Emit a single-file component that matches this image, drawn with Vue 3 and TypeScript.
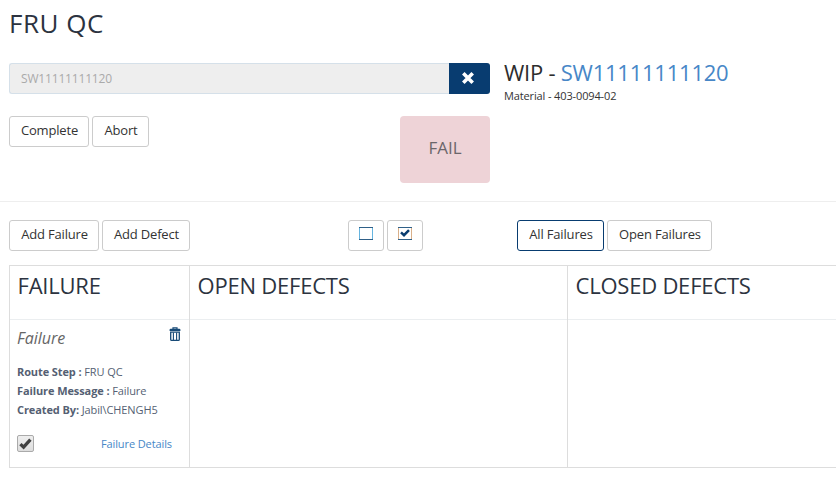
<script setup lang="ts">
import { ref } from 'vue'

const serial = ref('SW11111111120')
const details = [
  { label: 'Route Step :', value: 'FRU QC' },
  { label: 'Failure Message :', value: 'Failure' },
  { label: 'Created By:', value: 'Jabil\\CHENGH5' },
]
</script>

<template>
  <main class="page">
    <h1 class="title">FRU QC</h1>

    <section class="top">
      <div class="scan">
        <div class="input-group">
          <input class="field" :value="serial" disabled />
          <button class="clear" aria-label="Clear">
            <svg width="14" height="14" viewBox="0 0 14 14"><path d="M2.3 2.3 11.7 11.7M11.7 2.3 2.3 11.7" stroke="#fff" stroke-width="3.6" /></svg>
          </button>
        </div>
        <div class="actions">
          <button class="btn w-complete">Complete</button>
          <button class="btn w-abort">Abort</button>
          <div class="status">FAIL</div>
        </div>
      </div>
      <div class="wip">
        <h2 class="wip-title"><span>WIP - </span><a>{{ serial }}</a></h2>
        <p class="material">Material - 403-0094-02</p>
      </div>
    </section>

    <section class="toolbar">
      <div class="group left">
        <button class="btn w-addf">Add Failure</button>
        <button class="btn w-addd">Add Defect</button>
      </div>
      <div class="group middle">
        <button class="btn icon" aria-label="Uncheck all">
          <svg width="14" height="13" viewBox="0 0 14 13"><path d="M0 .5H14M0 12.5H14" stroke="#2f6088" /><path d="M.5 1V12M13.5 1V12" stroke="#66b5e0" /></svg>
        </button>
        <button class="btn icon" aria-label="Check all">
          <svg width="14" height="13" viewBox="0 0 14 13"><path d="M0 .5H14M0 12.5H14" stroke="#2f6088" /><path d="M.5 1V12" stroke="#d9b08a" /><path d="M13.5 1V12" stroke="#d9b08a" /><path d="M3 5.4 6 8.2 11 3.2" fill="none" stroke="#083c70" stroke-width="2.5" /></svg>
        </button>
      </div>
      <div class="group">
        <button class="btn active w-all">All Failures</button>
        <button class="btn w-open">Open Failures</button>
      </div>
    </section>

    <section class="board">
      <div class="col col-failure">
        <h3 class="col-head">FAILURE</h3>
        <article class="card">
          <header class="card-head">
            <em>Failure</em>
            <svg class="trash" width="12" height="14" viewBox="0 0 12 14">
              <path d="M4 2V.8h4V2" fill="none" stroke="#174a77" stroke-width="1.2" />
              <path d="M.6 4V2.8Q.6 1.8 1.6 1.8h8.8q1 0 1 1V4z" fill="#174a77" />
              <path d="M1.7 5.2h8.6v7.2q0 .9-.9.9H2.6q-.9 0-.9-.9z" fill="none" stroke="#174a77" stroke-width="1.3" />
              <path d="M4.4 5.5v7.5M7.6 5.5v7.5" stroke="#174a77" stroke-width="1.1" />
            </svg>
          </header>
          <p v-for="d in details" :key="d.label" class="row"><b>{{ d.label }}</b> {{ d.value }}</p>
          <footer class="card-foot">
            <span class="check">
              <svg width="13" height="13" viewBox="0 0 13 13"><path d="M1.4 7.1 4.6 10.2 11.4 2.7" fill="none" stroke="#404040" stroke-width="3.3" /></svg>
            </span>
            <a class="link">Failure Details</a>
          </footer>
        </article>
      </div>
      <div class="col col-open"><h3 class="col-head">OPEN DEFECTS</h3></div>
      <div class="col col-closed"><h3 class="col-head">CLOSED DEFECTS</h3></div>
    </section>
  </main>
</template>

<style>
body { background: #fff; overflow: hidden; }
</style>

<style scoped>
.page, .page * { box-sizing: border-box; }
.page { height: 477px; overflow: hidden; font-family: "Open Sans", sans-serif; font-size: 13px; color: #333; }
h1, h2, h3, p { margin: 0; font-weight: 400; }
button, input { font: inherit; }
a { color: #4787c7; }

.title { height: 63px; padding: 5px 0 0 9px; font-size: 26px; letter-spacing: .5px; line-height: 36px; color: #2c3340; }
.top { display: flex; height: 139px; padding-left: 9px; border-bottom: 1px solid #eee; }
.scan { width: 481px; }
.input-group { display: flex; height: 31px; }
.field { width: 440px; height: 31px; padding: 0 11px; border: 1px solid #d5e0e9; border-right: 0; border-radius: 3px 0 0 3px; background: #eee; color: #aaa; font-size: 12px; letter-spacing: -.17px; }
.clear { display: flex; align-items: center; justify-content: center; width: 41px; height: 31px; padding: 0 3px 1px 0; border: 0; border-radius: 0 3px 3px 0; background: #083c70; }
.actions { display: flex; align-items: flex-start; gap: 3px; margin-top: 22px; }
.status { display: flex; align-items: center; justify-content: center; width: 90px; height: 67px; margin-left: auto; padding-bottom: 4px; border-radius: 4px; background: #eed3d7; color: #6b666b; font-size: 17px; }
.wip { padding-left: 14px; }
.wip-title { display: flex; margin-top: -6px; font-size: 22px; letter-spacing: -.24px; line-height: 30px; white-space: pre; color: #2d2d2d; }
.material { margin-top: 1px; font-size: 11px; line-height: 16px; letter-spacing: -.13px; }

.btn { display: flex; align-items: center; justify-content: center; height: 31px; padding: 0 0 3px 1px; border: 1px solid #ccc; border-radius: 3px; background: #fff; color: #333; white-space: nowrap; letter-spacing: -.17px; }
.btn.active { border-color: #083c70; }
.w-complete { width: 80px; }
.w-abort { width: 57px; }
.w-addf { width: 90px; }
.w-addd { width: 88px; }
.w-all { width: 87px; }
.w-open { width: 105px; }
.btn.icon { width: 36px; padding: 0 0 4px; }

.toolbar { display: flex; height: 63px; padding: 18px 0 0 9px; }
.group { display: flex; gap: 3px; }
.left { width: 339px; }
.middle { width: 169px; }

.board { display: flex; height: 203px; margin-left: 9px; border: 1px solid #ddd; border-right: 0; }
.col { border-right: 1px solid #ddd; }
.col-failure { width: 180px; }
.col-open { width: 378px; }
.col-closed { flex: 1; border-right: 0; }
.col-head { height: 54px; padding: 4px 0 0 7.5px; border-bottom: 1px solid #ebeef0; font-size: 22px; letter-spacing: -.22px; line-height: 30px; color: #2c3340; white-space: nowrap; }
.card { padding: 7px 8px 0 7px; color: #555f73; }
.card-head { display: flex; justify-content: space-between; height: 35px; font-size: 16px; line-height: 22px; color: #666; }
.row { font-size: 11px; line-height: 19px; white-space: nowrap; letter-spacing: -.1px; }
.card-foot { display: flex; align-items: center; justify-content: space-between; margin-top: 16px; padding-right: 9px; font-size: 11px; line-height: 17px; letter-spacing: -.1px; }
.check { display: flex; align-items: center; justify-content: center; width: 17px; height: 17px; border: 1px solid #aaa; border-radius: 2px; background: linear-gradient(#eee, #ddd); }
</style>
